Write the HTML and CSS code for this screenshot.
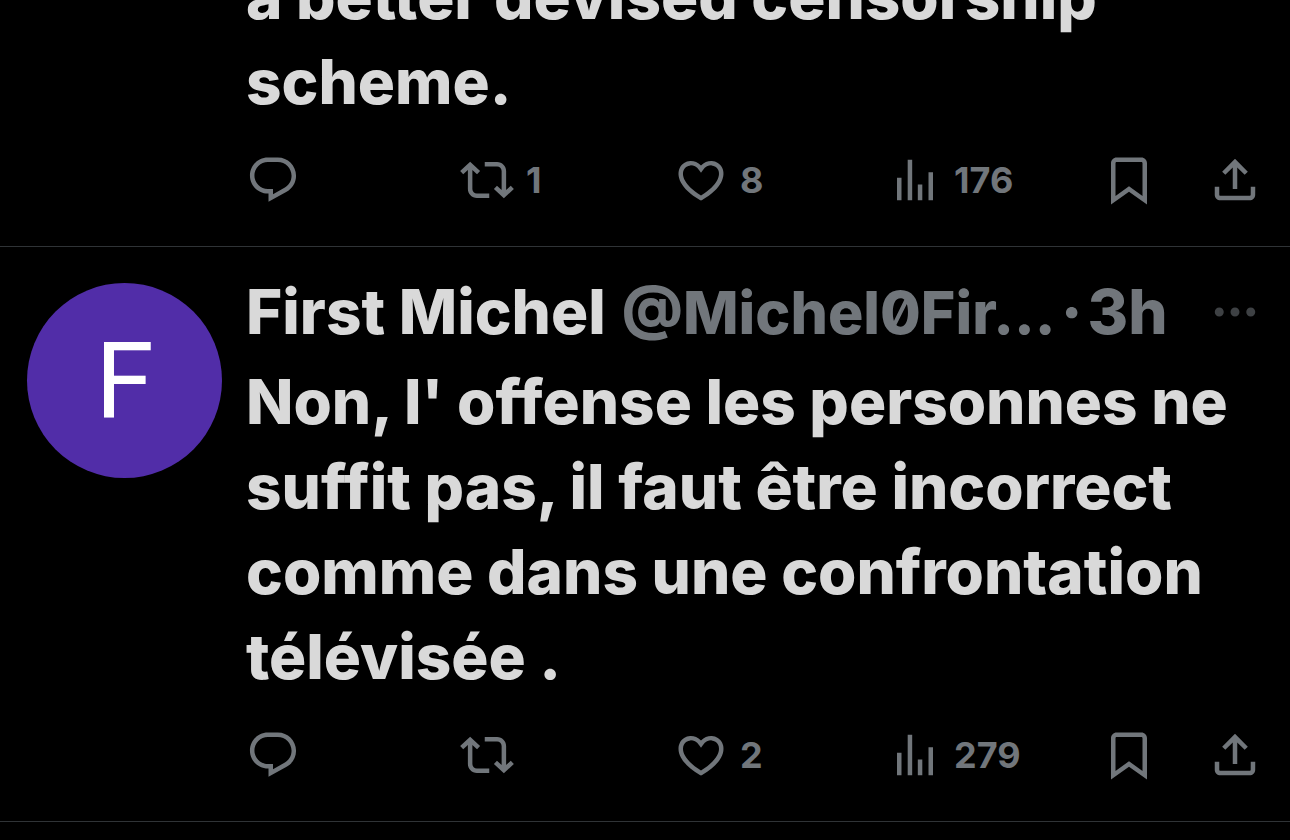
FILE: index.html
```
<!DOCTYPE html>
<html lang="fr">
<head>
    <meta charset="UTF-8">
    <meta name="viewport" content="width=device-width, initial-scale=1.0">
    <title>First Michel</title>
    <link rel="stylesheet" href="styles.css">
</head>
<body>

<!-- Shared icons -->
<svg class="sprite" aria-hidden="true">
    <symbol id="reply" viewBox="0 0 24 24"><path d="M1.751 10c0-4.42 3.584-8 8.005-8h4.366c4.49 0 8.129 3.64 8.129 8.13 0 2.96-1.607 5.68-4.196 7.11l-8.054 4.46v-3.69h-.067c-4.49.1-8.183-3.51-8.183-8.01zm8.005-6c-3.317 0-6.005 2.69-6.005 6 0 3.37 2.77 6.08 6.138 6.01l.351-.01h1.761v2.3l5.087-2.81c1.951-1.08 3.163-3.13 3.163-5.36 0-3.39-2.744-6.13-6.129-6.13H9.756z"/></symbol>
    <symbol id="repost" viewBox="0 0 24 24"><path d="M4.5 3.88l4.432 4.14-1.364 1.46L5.5 7.55V16c0 1.1.896 2 2 2H13v2H7.5c-2.209 0-4-1.79-4-4V7.55L1.432 9.48.068 8.02 4.5 3.88zM16.5 6H11V4h5.5c2.209 0 4 1.79 4 4v8.45l2.068-1.93 1.364 1.46-4.432 4.14-4.432-4.14 1.364-1.46 2.068 1.93V8c0-1.1-.896-2-2-2z"/></symbol>
    <symbol id="like" viewBox="0 0 24 24"><path d="M16.697 5.5c-1.222-.06-2.679.51-3.89 2.16l-.805 1.09-.806-1.09C9.984 6.01 8.526 5.44 7.304 5.5c-1.243.07-2.349.78-2.91 1.91-.552 1.12-.633 2.78.479 4.82 1.074 1.97 3.257 4.27 7.129 6.61 3.87-2.34 6.052-4.64 7.126-6.61 1.111-2.04 1.03-3.7.477-4.82-.561-1.13-1.666-1.84-2.908-1.91zm4.187 7.69c-1.351 2.48-4.001 5.12-8.379 7.67l-.503.3-.504-.3c-4.379-2.55-7.029-5.19-8.382-7.67-1.36-2.5-1.41-4.86-.514-6.67.887-1.79 2.647-2.91 4.601-3.01 1.651-.09 3.368.56 4.798 2.01 1.429-1.45 3.146-2.1 4.796-2.01 1.954.1 3.714 1.22 4.601 3.01.896 1.81.846 4.17-.514 6.67z"/></symbol>
    <symbol id="views" viewBox="0 0 24 24"><path d="M8.75 21V3h2v18h-2zM18 21V8.5h2V21h-2zM4 21l.004-10h2L6 21H4zm9.248 0v-7h2v7h-2z"/></symbol>
    <symbol id="bookmark" viewBox="0 0 24 24"><path d="M4 4.5C4 3.12 5.119 2 6.5 2h11C18.881 2 20 3.12 20 4.5v18.44l-8-5.71-8 5.71V4.5zM6.5 4c-.276 0-.5.22-.5.5v14.56l6-4.29 6 4.29V4.5c0-.28-.224-.5-.5-.5h-11z"/></symbol>
    <symbol id="share" viewBox="0 0 24 24"><path d="M12 2.59l5.7 5.7-1.41 1.42L13 6.41V16h-2V6.41l-3.3 3.3-1.41-1.42L12 2.59zM21 15l-.02 3.51c0 1.38-1.12 2.49-2.5 2.49H5.5C4.11 21 3 19.88 3 18.5V15h2v3.5c0 .28.22.5.5.5h12.98c.28 0 .5-.22.5-.5L19 15h2z"/></symbol>
    <symbol id="more" viewBox="0 0 24 24"><path d="M3 12c0-1.1.9-2 2-2s2 .9 2 2-.9 2-2 2-2-.9-2-2zm9 2c1.1 0 2-.9 2-2s-.9-2-2-2-2 .9-2 2 .9 2 2 2zm7 0c1.1 0 2-.9 2-2s-.9-2-2-2-2 .9-2 2 .9 2 2 2z"/></symbol>
</svg>

<main class="feed">
    <article class="tweet">
        <div class="avatar-column"></div>
        <div class="content">
            <p class="text" lang="en">a better devised censorship scheme.</p>
            <div class="actions">
                <button type="button" class="action" aria-label="Répondre"><svg class="icon"><use href="#reply"/></svg></button>
                <button type="button" class="action" aria-label="Reposter"><svg class="icon"><use href="#repost"/></svg><span>1</span></button>
                <button type="button" class="action" aria-label="J'aime"><svg class="icon"><use href="#like"/></svg><span>8</span></button>
                <a href="#" class="action" aria-label="Vues"><svg class="icon"><use href="#views"/></svg><span>176</span></a>
                <div class="tools">
                    <button type="button" aria-label="Signet"><svg class="icon"><use href="#bookmark"/></svg></button>
                    <button type="button" aria-label="Partager"><svg class="icon"><use href="#share"/></svg></button>
                </div>
            </div>
        </div>
    </article>

    <article class="tweet">
        <div class="avatar-column">
            <a href="#" class="avatar">F</a>
        </div>
        <div class="content">
            <header class="author">
                <a href="#" class="name">First Michel</a>
                <a href="#" class="handle">@Michel0Fir...</a>
                <span class="dot">·</span>
                <a href="#" class="time">3h</a>
                <button type="button" class="more" aria-label="Plus"><svg class="icon"><use href="#more"/></svg></button>
            </header>
            <p class="text">Non, l' offense les personnes ne suffit pas, il faut être incorrect comme dans une confrontation télévisée .</p>
            <div class="actions">
                <button type="button" class="action" aria-label="Répondre"><svg class="icon"><use href="#reply"/></svg></button>
                <button type="button" class="action" aria-label="Reposter"><svg class="icon"><use href="#repost"/></svg></button>
                <button type="button" class="action" aria-label="J'aime"><svg class="icon"><use href="#like"/></svg><span>2</span></button>
                <a href="#" class="action" aria-label="Vues"><svg class="icon"><use href="#views"/></svg><span>279</span></a>
                <div class="tools">
                    <button type="button" aria-label="Signet"><svg class="icon"><use href="#bookmark"/></svg></button>
                    <button type="button" aria-label="Partager"><svg class="icon"><use href="#share"/></svg></button>
                </div>
            </div>
        </div>
    </article>
</main>

</body>
</html>
```
FILE: styles.css
```
* {
    box-sizing: border-box;
}
body {
    margin: 0;
    background-color: #000;
    color: #D9D9D9;
    font-family: Inter, sans-serif;
    font-size: 62px;
    font-weight: 800;
    overflow: hidden;
}
a {
    color: inherit;
    text-decoration: none;
}
button {
    padding: 0;
    border: none;
    background: none;
    color: inherit;
    font: inherit;
    cursor: pointer;
}
.sprite {
    display: none;
}
.icon {
    display: block;
    flex: none;
    width: 54px;
    height: 54px;
    fill: currentColor;
}
/* the feed is scrolled a little into the first tweet */
.feed {
    margin-top: -82px;
}
.tweet {
    display: flex;
    gap: 24px;
    padding: 36px 28px 39px 27px;
    border-bottom: 1px solid #2F3336;
}
.avatar-column {
    flex: none;
    width: 195px;
}
.avatar {
    display: flex;
    align-items: center;
    justify-content: center;
    height: 195px;
    border-radius: 50%;
    background-color: #512DA8;
    color: #FFF;
    font-family: Roboto, sans-serif;
    font-size: 106px;
    font-weight: 400;
}
.content {
    flex: 1;
    min-width: 0;
}
.author {
    display: flex;
    align-items: baseline;
    height: 58px;
    margin-bottom: 18px;
    color: #71767B;
    line-height: 58px;
    white-space: nowrap;
}
.name {
    margin-right: 16px;
    color: #D9D9D9;
}
.handle {
    font-size: 59px;
    font-feature-settings: "zero";
}
.dot {
    margin: 0 5px;
}
.more {
    align-self: center;
    margin-left: auto;
    color: #3E4144;
}
.text {
    margin: 0;
    line-height: 85px;
}
.actions {
    display: flex;
    align-items: center;
    margin-top: 29px;
    color: #71767B;
    font-size: 36px;
    font-weight: 700;
}
.action {
    display: flex;
    flex: 1;
    align-items: center;
    gap: 12px;
}
.tools {
    display: flex;
    gap: 52px;
}
```
